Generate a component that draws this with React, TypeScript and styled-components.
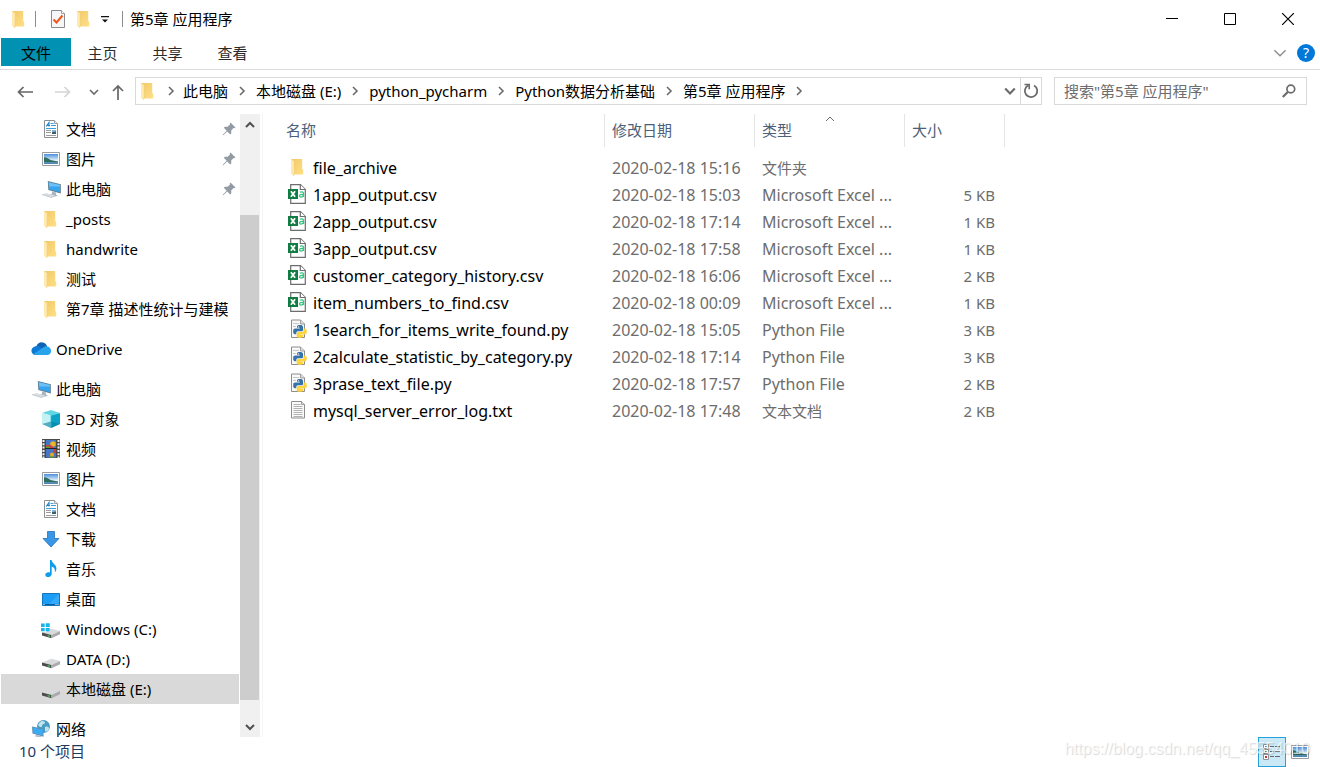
import React from "react";
import styled, { createGlobalStyle, css } from "styled-components";

const FONT = '"Noto Sans", "Noto Sans CJK SC", sans-serif';

const GlobalStyle = createGlobalStyle`
  *, *::before, *::after { box-sizing: border-box; }
  body { margin: 0; background: #fff; color: #000; font-family: ${FONT}; font-size: 15px; line-height: 20px; }
  button, input { font: inherit; color: inherit; margin: 0; }
  button { padding: 0; border: 0; background: none; cursor: default; }
  a { color: inherit; text-decoration: none; cursor: default; }
  svg { display: block; flex: none; }
`;

/* ---------- icons ---------- */

const FolderIcon = () => (
  <svg width="20" height="20" viewBox="0 -1 20 20" aria-hidden="true">
    <defs>
      <linearGradient id="fold" x1="0" y1="0" x2="1" y2="1">
        <stop offset="0" stopColor="#f0c96a" />
        <stop offset="1" stopColor="#ffdf85" />
      </linearGradient>
    </defs>
    <path d="M3 1h11.200v10l1 1v4.500H5.500z" fill="url(#fold)" />
    <path d="M3 1l3.300 2.600v11.600L5.600 18 3 15.700z" fill="#ffe9ae" />
    <path d="M6.300 3.600v11.600l-.7 2.700" fill="none" stroke="#efc869" strokeWidth=".6" />
  </svg>
);

const DocumentIcon = () => (
  <svg width="20" height="20" viewBox="0 0 20 20" aria-hidden="true">
    <path d="M3.500 1.500h10l3 3v14h-13z" fill="#fff" stroke="#8b8f92" />
    <path d="M13.500 1.500v3h3" fill="#e8e8e8" stroke="#8b8f92" strokeWidth=".8" />
    <path d="M5.200 7.500L8 3.500v4M6.200 6.500H9" fill="none" stroke="#1a86c9" strokeWidth="1.100" />
    <path d="M9.500 4.500h3M10 6.500h5M5 9.500h10" stroke="#3b9ddb" />
    <path d="M5 11.500h5M5 13.500h5M5 16.500h10" stroke="#9a9a9a" />
    <path d="M11 11h4v4h-4z" fill="#7fb4d8" />
    <path d="M11 13.300l4-.8V15h-4z" fill="#38606f" />
  </svg>
);

const PictureIcon = () => (
  <svg width="20" height="20" viewBox="0 0 20 20" aria-hidden="true">
    <defs>
      <linearGradient id="sky" x1="0" y1="0" x2="0" y2="1">
        <stop offset="0" stopColor="#4d8fdc" />
        <stop offset=".65" stopColor="#e5f4fa" />
        <stop offset="1" stopColor="#6eaad0" />
      </linearGradient>
    </defs>
    <path d="M1.500 3.500h17v13h-17z" fill="#fff" stroke="#989da1" />
    <path d="M3 5h14v10H3z" fill="url(#sky)" />
    <path d="M3 8.300c3 .2 4.500 1.500 6.500 2.600l7.500 1.700v.7H3z" fill="#2f6d5c" />
    <path d="M3 13.200h14V15H3z" fill="#4f86b4" />
  </svg>
);

const ComputerIcon = () => (
  <svg width="20" height="20" viewBox="0 0 20 20" aria-hidden="true">
    <path d="M6.800 2l13 3.200v9.300L7.300 11z" fill="#5f7f93" />
    <path d="M7.800 3.200l11.200 2.800v7.200L8.200 10.200z" fill="#36a5f0" />
    <path d="M7.800 3.200l11.200 2.800v1.500L8 7.500z" fill="#6bc0f7" />
    <path d="M11 12.200l4 1.200v2.300l2 .9-2.500.9-5.300-2 1.800-1z" fill="#aab6be" />
    <path d="M1 15.500l4.500-1.400 9 2.600-4.200 1.800z" fill="#d9dee3" />
    <path d="M1 15.500l9.300 3 4.200-1.800" fill="none" stroke="#aeb7bf" strokeWidth=".7" />
  </svg>
);

const OneDriveIcon = () => (
  <svg width="20" height="20" viewBox="0 0 20 20" aria-hidden="true">
    <path d="M5.500 7C7 3.500 10 2.500 13 3.800c1.700.8 2.700 2 3 3.800L12 11z" fill="#0f62b4" />
    <path d="M4.500 16C-.8 15.500-1 8.200 4.500 7.200c2.200-.5 3.800.2 5 1L13 12l-6 4z" fill="#0d7ad5" />
    <path d="M2.200 15.200L13.200 7.800c5-1.800 7 2 6.800 4.700-.2 2-1.700 3.500-3.700 3.500H4.500c-1 0-1.700-.3-2.300-.8z" fill="#28a4ec" />
  </svg>
);

const CubeIcon = () => (
  <svg width="20" height="20" viewBox="0 0 20 20" aria-hidden="true">
    <path d="M1 4l9-3 9 3-9 2.500z" fill="#63d6e4" />
    <path d="M1 4l9 2.500V19l-9-4z" fill="#c4f1f4" />
    <path d="M19 4l-9 2.500V19l9-4z" fill="#0ca3c6" />
    <path d="M1 15l9-2.500 9 2.500-9 4z" fill="#087e9f" opacity=".6" />
    <path d="M10 6v13" stroke="#24bfd5" strokeWidth=".7" />
  </svg>
);

const VideoIcon = () => (
  <svg width="20" height="20" viewBox="0 0 20 20" aria-hidden="true">
    <path d="M1 0h18v19H1z" fill="#4a4a4a" />
    <path d="M2.500 1v18M17.500 1v18" stroke="#f2f2f2" strokeWidth="2" strokeDasharray="2 1.300" />
    <path d="M5 1h10v8H5zM5 10h10v8.500H5z" fill="#4477c8" />
    <circle cx="12" cy="5" r="2.800" fill="#e8b52b" />
    <path d="M5 6h5l3 3H5zM12 10h3v4h-3z" fill="#c8433c" />
    <path d="M5 7.500h4V9H5zM8 17l3-1.500 3 3H8z" fill="#5a9c38" />
    <circle cx="11" cy="15.500" r="2" fill="#e9a928" />
    <path d="M4 9.500h12" stroke="#222" />
  </svg>
);

const DownloadIcon = () => (
  <svg width="20" height="20" viewBox="0 0 20 20" aria-hidden="true">
    <path d="M6.500 2.500h7v7H18L10 18 2 9.500h4.500z" fill="#3a96e6" stroke="#2272bd" strokeWidth=".8" />
  </svg>
);

const MusicIcon = () => (
  <svg width="20" height="20" viewBox="0 0 20 20" aria-hidden="true">
    <path d="M9 1h1.600c.3 3.500 5.400 4.600 4.800 9.300-.2 1.500-.8 2.300-1.600 2.900.7-3-.8-5-3.100-5.700V15c0 3.600-6.200 4.200-6.400 1-.1-2.200 2.700-3.300 4.700-2.500z" fill="#109cec" />
  </svg>
);

const DesktopIcon = () => (
  <svg width="20" height="20" viewBox="0 0 20 20" aria-hidden="true">
    <path d="M1.500 4.500h17v12h-17z" fill="#1b9df7" stroke="#1377bd" />
    <path d="M18 5v9L7 16z" fill="#48b3fb" opacity=".6" />
    <path d="M2 15.500h16" stroke="#0c5c9b" />
    <path d="M2.500 15.500h1M14.500 15.500h1M16.500 15.500h1" stroke="#fff" />
  </svg>
);

const DriveIcon = ({ system }: { system?: boolean }) => (
  <svg width="20" height="20" viewBox="0 0 20 20" aria-hidden="true">
    <path d="M1 13.500l9.500-3.800 8.500 2.300-8.500 4z" fill="#d9dadb" />
    <path d="M1 13.500l9.500 2.500v3.200L1 16.500z" fill="#4a4d4b" />
    <path d="M10.500 16l8.500-4v3.200l-8.500 4z" fill="#a9abac" />
    <path d="M6.500 16l2.500.700v1.200l-2.500-.7z" fill="#39d353" />
    {system && (
      <>
        <path d="M0 4h9v9H0z" fill="#fff" />
        <path d="M0 4.500h3.700v3.400H0zM4.700 4.200h4v3.700h-4zM0 8.900h3.700v3.400H0zM4.700 8.900h4v3.600h-4z" fill="#15b4ee" />
      </>
    )}
  </svg>
);

const NetworkIcon = () => (
  <svg width="20" height="20" viewBox="0 0 20 20" aria-hidden="true">
    <circle cx="12.500" cy="7.500" r="6.500" fill="#4a9cc4" />
    <path d="M9 3c2-2 5-1 5 .5S11 5 11 7 8 8 7 6zM14 8c2-1 4 0 4 1.500s-2 3.500-4 3z" fill="#c1e3ee" />
    <path d="M1 7.500l11.500 2.300v8L1.500 14.500z" fill="#5d8eac" />
    <path d="M1.800 8.500l9.900 2v6l-9.400-2.600z" fill="#3cabf5" />
    <path d="M5.500 15.700l5 1.600-1 1.400-6-1.500z" fill="#b0bec7" />
  </svg>
);

const PinIcon = () => (
  <svg width="14" height="14" viewBox="0 0 14 14" aria-hidden="true">
    <path d="M8.500.5l5 5-1.200.8-.8-.2-2.300 2.500.1 2.700-1.100 1.100-3-3L1.500 13 .7 13.400 1 12.500l3.700-3.800-2.900-2.900 1.100-1.100 2.700.1L8 2.400l-.2-.8z" fill="#929ba3" />
  </svg>
);

const ExcelIcon = () => (
  <svg width="20" height="20" viewBox="0 0 20 20" aria-hidden="true">
    <path d="M2.700.7h9.800l4.800 4.800v13.800H2.700z" fill="#fff" stroke="#6d6d6d" strokeWidth="1.200" />
    <path d="M12.300.7v4.800h5" fill="#fff" stroke="#6d6d6d" strokeWidth="1.200" />
    <path d="M0 5h10v10H0z" fill="#107c41" />
    <path d="M2.900 7.200l4.200 5.600M7.100 7.200l-4.200 5.600" stroke="#fff" strokeWidth="1.800" />
    <path d="M11.800 8.300c1.500-.9 3.700-.6 3.700 1v3.800M15.400 10.300c-2.200-.1-3.900.2-3.900 1.500 0 1.800 2.900 1.500 3.900-.1" fill="none" stroke="#33c481" strokeWidth="1.300" />
  </svg>
);

const PythonIcon = () => (
  <svg width="20" height="20" viewBox="0 0 20 20" aria-hidden="true">
    <path d="M3.500 1h9l4 4v13.500h-13z" fill="#f8f8f8" stroke="#8d8d8d" />
    <path d="M12.500 1v4h4" fill="#ddd" stroke="#8d8d8d" strokeWidth=".8" />
    <path d="M5 4.500h6M5 7.500h3M5 10.500h2M5 13.500h2" stroke="#c7c7c7" />
    <path d="M9.500 6.500c1.300-.6 3.500-.6 4.700 0 .6.400.8.900.8 1.500v2.700c0 1-.7 1.600-1.600 1.600H10c-1 0-1.700.8-1.700 1.800v1.200H7c-1.300 0-1.800-1.300-1.800-3 0-1.800.7-2.900 2-2.900h4.600v-.6H9V7.500c0-.4.100-.7.500-1z" fill="#3572a8" />
    <path d="M15.500 9.500h1.400c1.300 0 1.900 1.300 1.900 3 0 1.900-.8 2.900-2 2.900h-4.500v.6H15v1.500c0 1.700-6 1.900-6.300 0v-2.900c0-.9.700-1.500 1.600-1.500h3.400c1 0 1.800-.8 1.800-1.700z" fill="#ffd43b" />
    <circle cx="10.500" cy="7.800" r=".6" fill="#fff" />
  </svg>
);

const TextIcon = () => (
  <svg width="20" height="20" viewBox="0 0 20 20" aria-hidden="true">
    <path d="M3.500 1.500h10l3 3v13.500h-13z" fill="#fafafa" stroke="#8d8d8d" />
    <path d="M13.500 1.500v3h3" fill="#ddd" stroke="#8d8d8d" strokeWidth=".8" />
    <path d="M5.500 4.500h7M5.500 6.500h9M5.500 8.500h9M5.500 10.500h9M5.500 12.500h9M5.500 14.500h9M5.500 16.500h9" stroke="#a9a9a9" strokeWidth=".9" />
  </svg>
);

const CheckDocIcon = () => (
  <svg width="16" height="20" viewBox="0 0 16 20" aria-hidden="true">
    <path d="M1.500 1.500h10l3 3v14h-13z" fill="#f5f6f7" stroke="#8b8b8b" />
    <path d="M11.500 1.500v3h3" fill="#fff" stroke="#8b8b8b" strokeWidth=".8" />
    <path d="M3.500 10.500l3 3 6-7" fill="none" stroke="#f0561d" strokeWidth="2" />
  </svg>
);

type ChevronProps = { dir: "down" | "right" | "up"; w?: number; color?: string; size?: number };
const turns = { down: 0, right: -90, up: 180 };
const Chevron = ({ dir, w = 2, color = "#6b6b6b", size = 10 }: ChevronProps) => (
  <svg width={size} height={size} viewBox="0 0 10 10" aria-hidden="true">
    <path d="M1 3l4 4 4-4" transform={`rotate(${turns[dir]} 5 5)`} fill="none" stroke={color} strokeWidth={w} />
  </svg>
);

const ArrowIcon = ({ color, flip }: { color: string; flip?: boolean }) => (
  <svg width="16" height="14" viewBox="0 0 16 14" aria-hidden="true">
    <path d={flip ? "M0 7h14M9.500 2l5 5-5 5" : "M16 7H2M6.500 2l-5 5 5 5"} fill="none" stroke={color} strokeWidth="1.700" />
  </svg>
);

/* ---------- window frame ---------- */

const Window = styled.div`
  position: relative;
  display: flex;
  flex-direction: column;
  height: 100vh;
  overflow: hidden;
  background: #fff;
`;

const TitleBar = styled.header`
  display: flex;
  align-items: center;
  height: 38px;
  padding-left: 3px;
`;

const TitleRule = styled.span`
  width: 1px;
  height: 16px;
  background: #8c8c8c;
`;

const QuickButton = styled.button<{ $width: number }>`
  display: flex;
  align-items: center;
  justify-content: center;
  width: ${(p) => p.$width}px;
  height: 24px;
`;

const Title = styled.h1`
  flex: 1;
  margin: 0 0 0 7px;
  font-size: 15px;
  font-weight: 400;
`;

const CaptionButton = styled.button`
  display: flex;
  align-items: center;
  justify-content: center;
  width: 58px;
  height: 38px;
`;

const CaptionButtons = styled.div`
  display: flex;
  padding-right: 3px;
`;

const Ribbon = styled.nav`
  display: flex;
  align-items: center;
  height: 32px;
  padding: 0 5px 3px 1px;
  border-bottom: 1px solid #dadbdc;
`;

const RibbonTab = styled.button<{ $active?: boolean }>`
  width: 65px;
  height: 28px;
  padding: 2px 2px 0 0;
  color: #2b2b2b;
  ${(p) =>
    p.$active &&
    css`
      width: 70px;
      padding-right: 0;
      background: #0091b3;
      color: #000;
    `}
`;

const RibbonTools = styled.div`
  display: flex;
  align-items: center;
  gap: 10px;
  margin-left: auto;
  padding-top: 2px;
`;

const HelpButton = styled.button`
  width: 18px;
  height: 18px;
  border-radius: 50%;
  background: #0078d7;
  color: #fff;
  font-size: 14px;
  line-height: 18px;
`;

/* ---------- address row ---------- */

const AddressRow = styled.div`
  display: flex;
  align-items: center;
  height: 44px;
  padding: 0 13px 0 12px;
`;

const NavButton = styled.button<{ $width: number }>`
  display: flex;
  align-items: center;
  justify-content: center;
  width: ${(p) => p.$width}px;
  height: 26px;
`;

const AddressBox = styled.div`
  display: flex;
  flex: 1;
  align-items: center;
  min-width: 0;
  height: 28px;
  margin: 0 12px 2px 0;
  padding-left: 2px;
  border: 1px solid #d9d9d9;
`;

const Crumbs = styled.ol`
  display: flex;
  flex: 1;
  align-items: center;
  min-width: 0;
  margin: 0;
  padding: 0;
  overflow: hidden;
  list-style: none;
  white-space: nowrap;
`;

const Crumb = styled.li`
  display: flex;
  align-items: center;
`;

const CrumbArrow = styled.span<{ $first?: boolean }>`
  display: flex;
  justify-content: center;
  width: ${(p) => (p.$first ? 25 : 28)}px;
`;

const AddressButton = styled.button<{ $ruled?: boolean }>`
  display: flex;
  align-items: center;
  justify-content: center;
  width: ${(p) => (p.$ruled ? 21 : 20)}px;
  height: 26px;
  border-left: ${(p) => (p.$ruled ? "1px solid #d9d9d9" : "0")};
`;

const SearchBox = styled.form`
  display: flex;
  align-items: center;
  width: 253px;
  height: 28px;
  margin: 0 0 2px;
  padding: 0 10px 0 9px;
  border: 1px solid #d9d9d9;
`;

const SearchInput = styled.input`
  flex: 1;
  min-width: 0;
  padding: 0;
  border: 0;
  outline: 0;
  background: none;
  &::placeholder { color: #6d6d6d; opacity: 1; }
`;

/* ---------- body ---------- */

const Body = styled.div`
  display: flex;
  flex: 1;
  min-height: 0;
`;

const Tree = styled.nav`
  width: 239px;
  padding-left: 1px;
  overflow: hidden;
`;

const TreeGroup = styled.ul`
  margin: 0 0 10px;
  padding: 0;
  list-style: none;
`;

const TreeLink = styled.a<{ $root?: boolean; $selected?: boolean }>`
  display: flex;
  align-items: center;
  gap: 5px;
  height: 30px;
  padding: 0 3px 0 ${(p) => (p.$root ? 30 : 40)}px;
  background: ${(p) => (p.$selected ? "#d9d9d9" : "none")};
  line-height: 16px;
  white-space: nowrap;
`;

const TreeLabel = styled.span`
  flex: 1;
`;

const ScrollTrack = styled.div`
  display: flex;
  flex-direction: column;
  width: 20px;
  margin-left: 1px;
  background: #f0f0f0;
`;

const ScrollButton = styled.button`
  display: flex;
  align-items: center;
  justify-content: center;
  height: 21px;
`;

const ScrollLane = styled.div`
  display: flex;
  flex: 1;
  flex-direction: column;
`;

const ScrollSpace = styled.div<{ $part: number }>`
  flex: ${(p) => p.$part};
`;

const ScrollThumb = styled(ScrollSpace)`
  margin-right: 1px;
  background: #cdcdcd;
`;

const Content = styled.main`
  flex: 1;
  min-width: 0;
  margin-left: 2px;
  padding-left: 2px;
  border-left: 1px solid #f5f5f5;
  overflow: hidden;
`;

const FileTable = styled.table`
  width: 740px;
  table-layout: fixed;
  border-collapse: separate;
  border-spacing: 0;
  color: #6d6d6d;
`;

const HeadCell = styled.th<{ $width: number; $first?: boolean }>`
  position: relative;
  width: ${(p) => p.$width}px;
  height: 33px;
  padding: 0 0 2px ${(p) => (p.$first ? 21 : 7)}px;
  border-right: 1px solid #e5e5e5;
  color: #4c607a;
  font-weight: 400;
  text-align: left;
`;

const SortMark = styled.span`
  position: absolute;
  top: 0;
  left: 50%;
  margin-left: -5px;
`;

const HeadGap = styled.td`
  height: 7px;
  padding: 0;
`;

const Cell = styled.td<{ $align?: "right"; $latin?: boolean }>`
  height: 27px;
  padding: 0 ${(p) => (p.$align ? 10 : 8)}px 0 7px;
  font-size: ${(p) => (p.$latin ? 16 : 15)}px;
  text-align: ${(p) => p.$align ?? "left"};
  white-space: nowrap;
`;

const NameCell = styled(Cell)`
  padding-left: 23px;
  color: #000;
`;

const FileLink = styled.a`
  display: flex;
  align-items: center;
  gap: 5px;
  > svg { margin-bottom: 1px; }
`;

/* ---------- status bar ---------- */

const StatusBar = styled.footer`
  display: flex;
  align-items: center;
  height: 30px;
  padding: 0 6px 0 19px;
  color: #1e395b;
`;

const StatusText = styled.span`
  flex: 1;
  padding-bottom: 2px;
`;

const ViewButton = styled.button<{ $active?: boolean }>`
  display: flex;
  align-items: center;
  justify-content: center;
  width: 28px;
  height: 30px;
  border: 1px solid ${(p) => (p.$active ? "#26a0da" : "transparent")};
  background: ${(p) => (p.$active ? "#cbe8f6" : "none")};
`;

const Watermark = styled.span`
  position: absolute;
  right: 10px;
  bottom: 8px;
  color: rgba(255, 255, 255, 0.7);
  font: 16px/20px "Liberation Sans", sans-serif;
  text-shadow: 1px 1px 1px rgba(0, 0, 0, 0.16);
  pointer-events: none;
`;

/* ---------- data ---------- */

type Node = { label: string; icon: React.ReactNode; root?: boolean; pinned?: boolean; selected?: boolean };

const tree: Node[][] = [
  [
    { label: "文档", icon: <DocumentIcon />, pinned: true },
    { label: "图片", icon: <PictureIcon />, pinned: true },
    { label: "此电脑", icon: <ComputerIcon />, pinned: true },
    { label: "_posts", icon: <FolderIcon /> },
    { label: "handwrite", icon: <FolderIcon /> },
    { label: "测试", icon: <FolderIcon /> },
    { label: "第7章 描述性统计与建模", icon: <FolderIcon /> },
  ],
  [{ label: "OneDrive", icon: <OneDriveIcon />, root: true }],
  [
    { label: "此电脑", icon: <ComputerIcon />, root: true },
    { label: "3D 对象", icon: <CubeIcon /> },
    { label: "视频", icon: <VideoIcon /> },
    { label: "图片", icon: <PictureIcon /> },
    { label: "文档", icon: <DocumentIcon /> },
    { label: "下载", icon: <DownloadIcon /> },
    { label: "音乐", icon: <MusicIcon /> },
    { label: "桌面", icon: <DesktopIcon /> },
    { label: "Windows (C:)", icon: <DriveIcon system /> },
    { label: "DATA (D:)", icon: <DriveIcon /> },
    { label: "本地磁盘 (E:)", icon: <DriveIcon />, selected: true },
  ],
  [{ label: "网络", icon: <NetworkIcon />, root: true }],
];

const crumbs = ["此电脑", "本地磁盘 (E:)", "python_pycharm", "Python数据分析基础", "第5章 应用程序"];

const fileIcons = { folder: <FolderIcon />, csv: <ExcelIcon />, py: <PythonIcon />, txt: <TextIcon /> };
const fileTypes = {
  folder: { text: "文件夹", latin: false },
  csv: { text: "Microsoft Excel ...", latin: true },
  py: { text: "Python File", latin: true },
  txt: { text: "文本文档", latin: false },
};

type FileRow = [name: string, date: string, kind: keyof typeof fileIcons, size: string];

const files: FileRow[] = [
  ["file_archive", "2020-02-18 15:16", "folder", ""],
  ["1app_output.csv", "2020-02-18 15:03", "csv", "5 KB"],
  ["2app_output.csv", "2020-02-18 17:14", "csv", "1 KB"],
  ["3app_output.csv", "2020-02-18 17:58", "csv", "1 KB"],
  ["customer_category_history.csv", "2020-02-18 16:06", "csv", "2 KB"],
  ["item_numbers_to_find.csv", "2020-02-18 00:09", "csv", "1 KB"],
  ["1search_for_items_write_found.py", "2020-02-18 15:05", "py", "3 KB"],
  ["2calculate_statistic_by_category.py", "2020-02-18 17:14", "py", "3 KB"],
  ["3prase_text_file.py", "2020-02-18 17:57", "py", "2 KB"],
  ["mysql_server_error_log.txt", "2020-02-18 17:48", "txt", "2 KB"],
];

export default function App() {
  return (
    <Window>
      <GlobalStyle />
      <TitleBar>
        <QuickButton $width={32} aria-label="窗口菜单"><FolderIcon /></QuickButton>
        <TitleRule />
        <QuickButton $width={44} aria-label="属性"><CheckDocIcon /></QuickButton>
        <QuickButton $width={8} aria-label="新建文件夹"><FolderIcon /></QuickButton>
        <QuickButton $width={34} aria-label="自定义快速访问工具栏">
          <svg width="8" height="8" viewBox="0 0 8 8" aria-hidden="true">
            <path d="M0 1h8v1.200H0zM1 4.500h6L4 7.500z" fill="#111" />
          </svg>
        </QuickButton>
        <TitleRule />
        <Title>第5章 应用程序</Title>
        <CaptionButtons>
          <CaptionButton aria-label="最小化">
            <svg width="12" height="12" viewBox="0 0 12 12" aria-hidden="true"><path d="M0 5.500h12" stroke="#000" /></svg>
          </CaptionButton>
          <CaptionButton aria-label="最大化">
            <svg width="12" height="12" viewBox="0 0 12 12" aria-hidden="true"><path d="M.5.5h11v11H.5z" fill="none" stroke="#000" /></svg>
          </CaptionButton>
          <CaptionButton aria-label="关闭">
            <svg width="12" height="12" viewBox="0 0 12 12" aria-hidden="true"><path d="M0 0l12 12M12 0L0 12" stroke="#000" strokeWidth="1.200" /></svg>
          </CaptionButton>
        </CaptionButtons>
      </TitleBar>

      <Ribbon>
        <RibbonTab $active>文件</RibbonTab>
        <RibbonTab>主页</RibbonTab>
        <RibbonTab>共享</RibbonTab>
        <RibbonTab>查看</RibbonTab>
        <RibbonTools>
          <button aria-label="展开功能区"><Chevron dir="down" w={1} color="#8e8e8e" size={14} /></button>
          <HelpButton aria-label="帮助">?</HelpButton>
        </RibbonTools>
      </Ribbon>

      <AddressRow>
        <NavButton $width={26} aria-label="后退"><ArrowIcon color="#666" /></NavButton>
        <NavButton $width={50} aria-label="前进"><ArrowIcon color="#d5d5d5" flip /></NavButton>
        <NavButton $width={12} aria-label="最近浏览的位置"><Chevron dir="down" w={1.6} /></NavButton>
        <NavButton $width={35} aria-label="上移">
          <svg width="12" height="16" viewBox="0 0 12 16" aria-hidden="true">
            <path d="M6 16V2M1 7l5-5 5 5" fill="none" stroke="#666" strokeWidth="1.700" />
          </svg>
        </NavButton>
        <AddressBox>
          <FolderIcon />
          <Crumbs>
            <Crumb><CrumbArrow $first><Chevron dir="right" w={1.6} /></CrumbArrow></Crumb>
            {crumbs.map((name) => (
              <Crumb key={name}>
                <a href="#">{name}</a>
                <CrumbArrow><Chevron dir="right" w={1.6} /></CrumbArrow>
              </Crumb>
            ))}
          </Crumbs>
          <AddressButton aria-label="历史记录"><Chevron dir="down" w={1.8} size={12} /></AddressButton>
          <AddressButton $ruled aria-label="刷新">
            <svg width="16" height="16" viewBox="0 0 16 16" aria-hidden="true">
              <path d="M5.500 2.300a6.200 6.200 0 1 0 5.500.2" fill="none" stroke="#6b6b6b" strokeWidth="1.800" />
              <path d="M1.500 1.500h4.700v4.700" fill="none" stroke="#6b6b6b" strokeWidth="1.600" />
            </svg>
          </AddressButton>
        </AddressBox>
        <SearchBox role="search">
          <SearchInput type="text" aria-label="搜索" placeholder={'搜索"第5章 应用程序"'} />
          <svg width="14" height="14" viewBox="0 0 14 14" aria-hidden="true">
            <circle cx="8.800" cy="5" r="3.900" fill="none" stroke="#6b6b6b" strokeWidth="1.700" />
            <path d="M6 7.800L.8 13" stroke="#6b6b6b" strokeWidth="2.200" />
          </svg>
        </SearchBox>
      </AddressRow>

      <Body>
        <Tree aria-label="导航窗格">
          {tree.map((group, i) => (
            <TreeGroup key={i}>
              {group.map((n) => (
                <li key={n.label}>
                  <TreeLink href="#" $root={n.root} $selected={n.selected}>
                    {n.icon}
                    <TreeLabel>{n.label}</TreeLabel>
                    {n.pinned && <PinIcon />}
                  </TreeLink>
                </li>
              ))}
            </TreeGroup>
          ))}
        </Tree>
        <ScrollTrack>
          <ScrollButton aria-label="向上滚动"><Chevron dir="up" w={2} color="#505050" /></ScrollButton>
          <ScrollLane>
            <ScrollSpace $part={80} />
            <ScrollThumb $part={485} />
            <ScrollSpace $part={16} />
          </ScrollLane>
          <ScrollButton aria-label="向下滚动"><Chevron dir="down" w={2} color="#505050" /></ScrollButton>
        </ScrollTrack>
        <Content>
          <FileTable>
            <thead>
              <tr>
                <HeadCell $width={340} $first>名称</HeadCell>
                <HeadCell $width={150}>修改日期</HeadCell>
                <HeadCell $width={150}>
                  类型
                  <SortMark><Chevron dir="up" w={1} /></SortMark>
                </HeadCell>
                <HeadCell $width={100}>大小</HeadCell>
              </tr>
            </thead>
            <tbody>
              <tr><HeadGap colSpan={4} /></tr>
              {files.map(([name, date, kind, size]) => (
                <tr key={name}>
                  <NameCell $latin>
                    <FileLink href="#">{fileIcons[kind]}{name}</FileLink>
                  </NameCell>
                  <Cell $latin>{date}</Cell>
                  <Cell $latin={fileTypes[kind].latin}>{fileTypes[kind].text}</Cell>
                  <Cell $align="right">{size}</Cell>
                </tr>
              ))}
            </tbody>
          </FileTable>
        </Content>
      </Body>

      <StatusBar>
        <StatusText>10 个项目</StatusText>
        <ViewButton $active aria-label="详细信息">
          <svg width="20" height="20" viewBox="0 0 20 20" aria-hidden="true">
            <path d="M1.500 2.500h5v4h-5zM1.500 7.500h5v4h-5zM1.500 12.500h5v5h-5z" fill="#fff" stroke="#8d9296" />
            <path d="M3 4h2v1H3z" fill="#4a88c8" />
            <path d="M3 9h2v1H3z" fill="#4b9a54" />
            <path d="M3 14h2v2H3z" fill="#c4362c" />
            <path d="M8 4.500h4M13 4.500h5M8 9.500h4M13 9.500h5M8 14.500h4M13 14.500h5" stroke="#63686c" />
          </svg>
        </ViewButton>
        <ViewButton aria-label="大缩略图"><PictureIcon /></ViewButton>
      </StatusBar>
      <Watermark>https://blog.csdn.net/qq_45554010</Watermark>
    </Window>
  );
}
